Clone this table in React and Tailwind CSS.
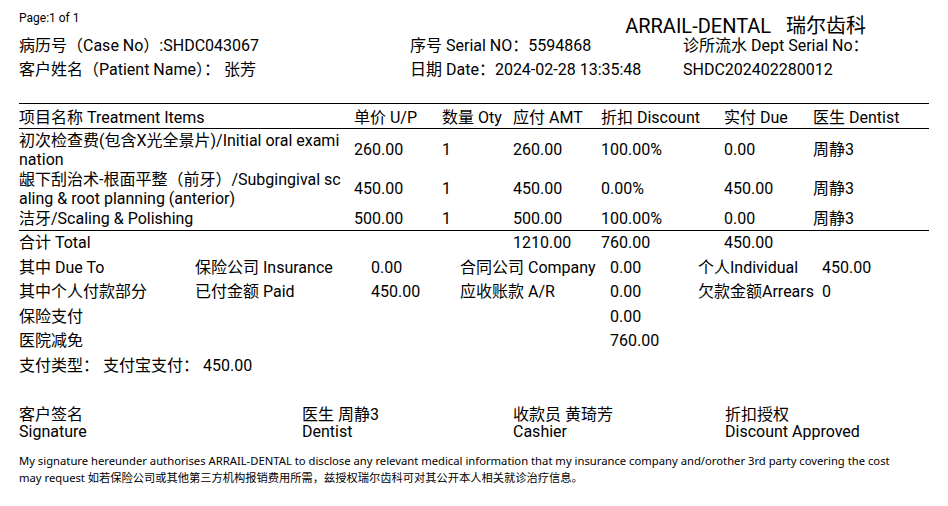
import React from "react";

const items = [
  {
    name: ["初次检查费(包含X光全景片)/Initial oral exami", "nation"],
    up: "260.00",
    qty: "1",
    amt: "260.00",
    discount: "100.00%",
    due: "0.00",
    dentist: "周静3",
  },
  {
    name: ["龈下刮治术-根面平整（前牙）/Subgingival sc", "aling & root planning (anterior)"],
    up: "450.00",
    qty: "1",
    amt: "450.00",
    discount: "0.00%",
    due: "450.00",
    dentist: "周静3",
  },
  {
    name: ["洁牙/Scaling & Polishing"],
    up: "500.00",
    qty: "1",
    amt: "500.00",
    discount: "100.00%",
    due: "0.00",
    dentist: "周静3",
  },
];

const cols = "grid grid-cols-[335px_88px_71px_88px_123px_89px_88px]";
const sumCols = "grid grid-cols-[176px_176px_89px_150px_88px_124px_1fr] h-[24.5px] items-center";

const App = () => {
  return (
    <div
      className="w-[948px] h-[506px] bg-white text-black px-[19px] pt-[11px] text-[16px]"
      style={{ fontFamily: 'Roboto, "Noto Sans CJK SC", sans-serif' }}
    >
      {/* top line: page + brand */}
      <div className="flex justify-between items-start h-[23px]">
        <div className="text-[12px] leading-[14px]">Page:1 of 1</div>
        <div className="text-[20px] leading-[24px] mt-[3px] mr-[63px] whitespace-nowrap">
          ARRAIL-DENTAL&nbsp;&nbsp;&nbsp;瑞尔齿科
        </div>
      </div>

      {/* case info */}
      <div className="grid grid-cols-[391px_273px_1fr] leading-[24px] whitespace-nowrap">
        <div>病历号（Case No）:SHDC043067</div>
        <div>序号 Serial NO：5594868</div>
        <div>诊所流水 Dept Serial No：</div>
        <div>客户姓名（Patient Name）： 张芳</div>
        <div>日期 Date：2024-02-28 13:35:48</div>
        <div>SHDC202402280012</div>
      </div>

      {/* treatment table */}
      <div className="mt-[21px] border-t border-black">
        <div className={`${cols} h-[25px] pt-[2px] items-center border-b border-black whitespace-nowrap`}>
          <div>项目名称 Treatment Items</div>
          <div>单价 U/P</div>
          <div>数量 Oty</div>
          <div>应付 AMT</div>
          <div>折扣 Discount</div>
          <div>实付 Due</div>
          <div>医生 Dentist</div>
        </div>
        <div className="border-b border-black pt-[2px]">
          {items.map((item) => (
            <div key={item.up} className={`${cols} items-center leading-[18.5px] py-[1px] whitespace-nowrap`}>
              <div>
                {item.name.map((line) => (
                  <div key={line}>{line}</div>
                ))}
              </div>
              <div>{item.up}</div>
              <div>{item.qty}</div>
              <div>{item.amt}</div>
              <div>{item.discount}</div>
              <div>{item.due}</div>
              <div>{item.dentist}</div>
            </div>
          ))}
        </div>
        <div className={`${cols} h-[25px] items-center`}>
          <div>合计 Total</div>
          <div></div>
          <div></div>
          <div>1210.00</div>
          <div>760.00</div>
          <div>450.00</div>
          <div></div>
        </div>
      </div>

      {/* breakdown */}
      <div className="whitespace-nowrap">
        <div className={sumCols}>
          <div>其中 Due To</div>
          <div>保险公司 Insurance</div>
          <div>0.00</div>
          <div>合同公司 Company</div>
          <div>0.00</div>
          <div>个人Individual</div>
          <div>450.00</div>
        </div>
        <div className={sumCols}>
          <div>其中个人付款部分</div>
          <div>已付金额 Paid</div>
          <div>450.00</div>
          <div>应收账款 A/R</div>
          <div>0.00</div>
          <div>欠款金额Arrears</div>
          <div>0</div>
        </div>
        <div className={sumCols}>
          <div>保险支付</div>
          <div></div>
          <div></div>
          <div></div>
          <div>0.00</div>
        </div>
        <div className={sumCols}>
          <div>医院减免</div>
          <div></div>
          <div></div>
          <div></div>
          <div>760.00</div>
        </div>
        <div className="flex h-[24.5px] items-center">
          <span className="w-[84px]">支付类型：</span>
          <span className="w-[100px]">支付宝支付：</span>
          <span>450.00</span>
        </div>
      </div>

      {/* signatures */}
      <div className="grid grid-cols-[283px_211px_212px_1fr] leading-[17px] mt-[28px] whitespace-nowrap">
        <div>
          <div>客户签名</div>
          <div>Signature</div>
        </div>
        <div>
          <div>医生 周静3</div>
          <div>Dentist</div>
        </div>
        <div>
          <div>收款员 黄琦芳</div>
          <div>Cashier</div>
        </div>
        <div>
          <div>折扣授权</div>
          <div>Discount Approved</div>
        </div>
      </div>

      {/* disclaimer */}
      <div
        className="mt-[12px] text-[11.25px] leading-[17px] whitespace-nowrap"
        style={{ fontFamily: '"Noto Sans", "Noto Sans CJK SC", sans-serif' }}
      >
        <div>
          My signature hereunder authorises ARRAIL-DENTAL to disclose any relevant medical information that my insurance company and/orother 3rd party covering the cost
        </div>
        <div>
          may request 如若保险公司或其他第三方机构报销费用所需，兹授权瑞尔齿科可对其公开本人相关就诊治疗信息。
        </div>
      </div>
    </div>
  );
};

export default App;
